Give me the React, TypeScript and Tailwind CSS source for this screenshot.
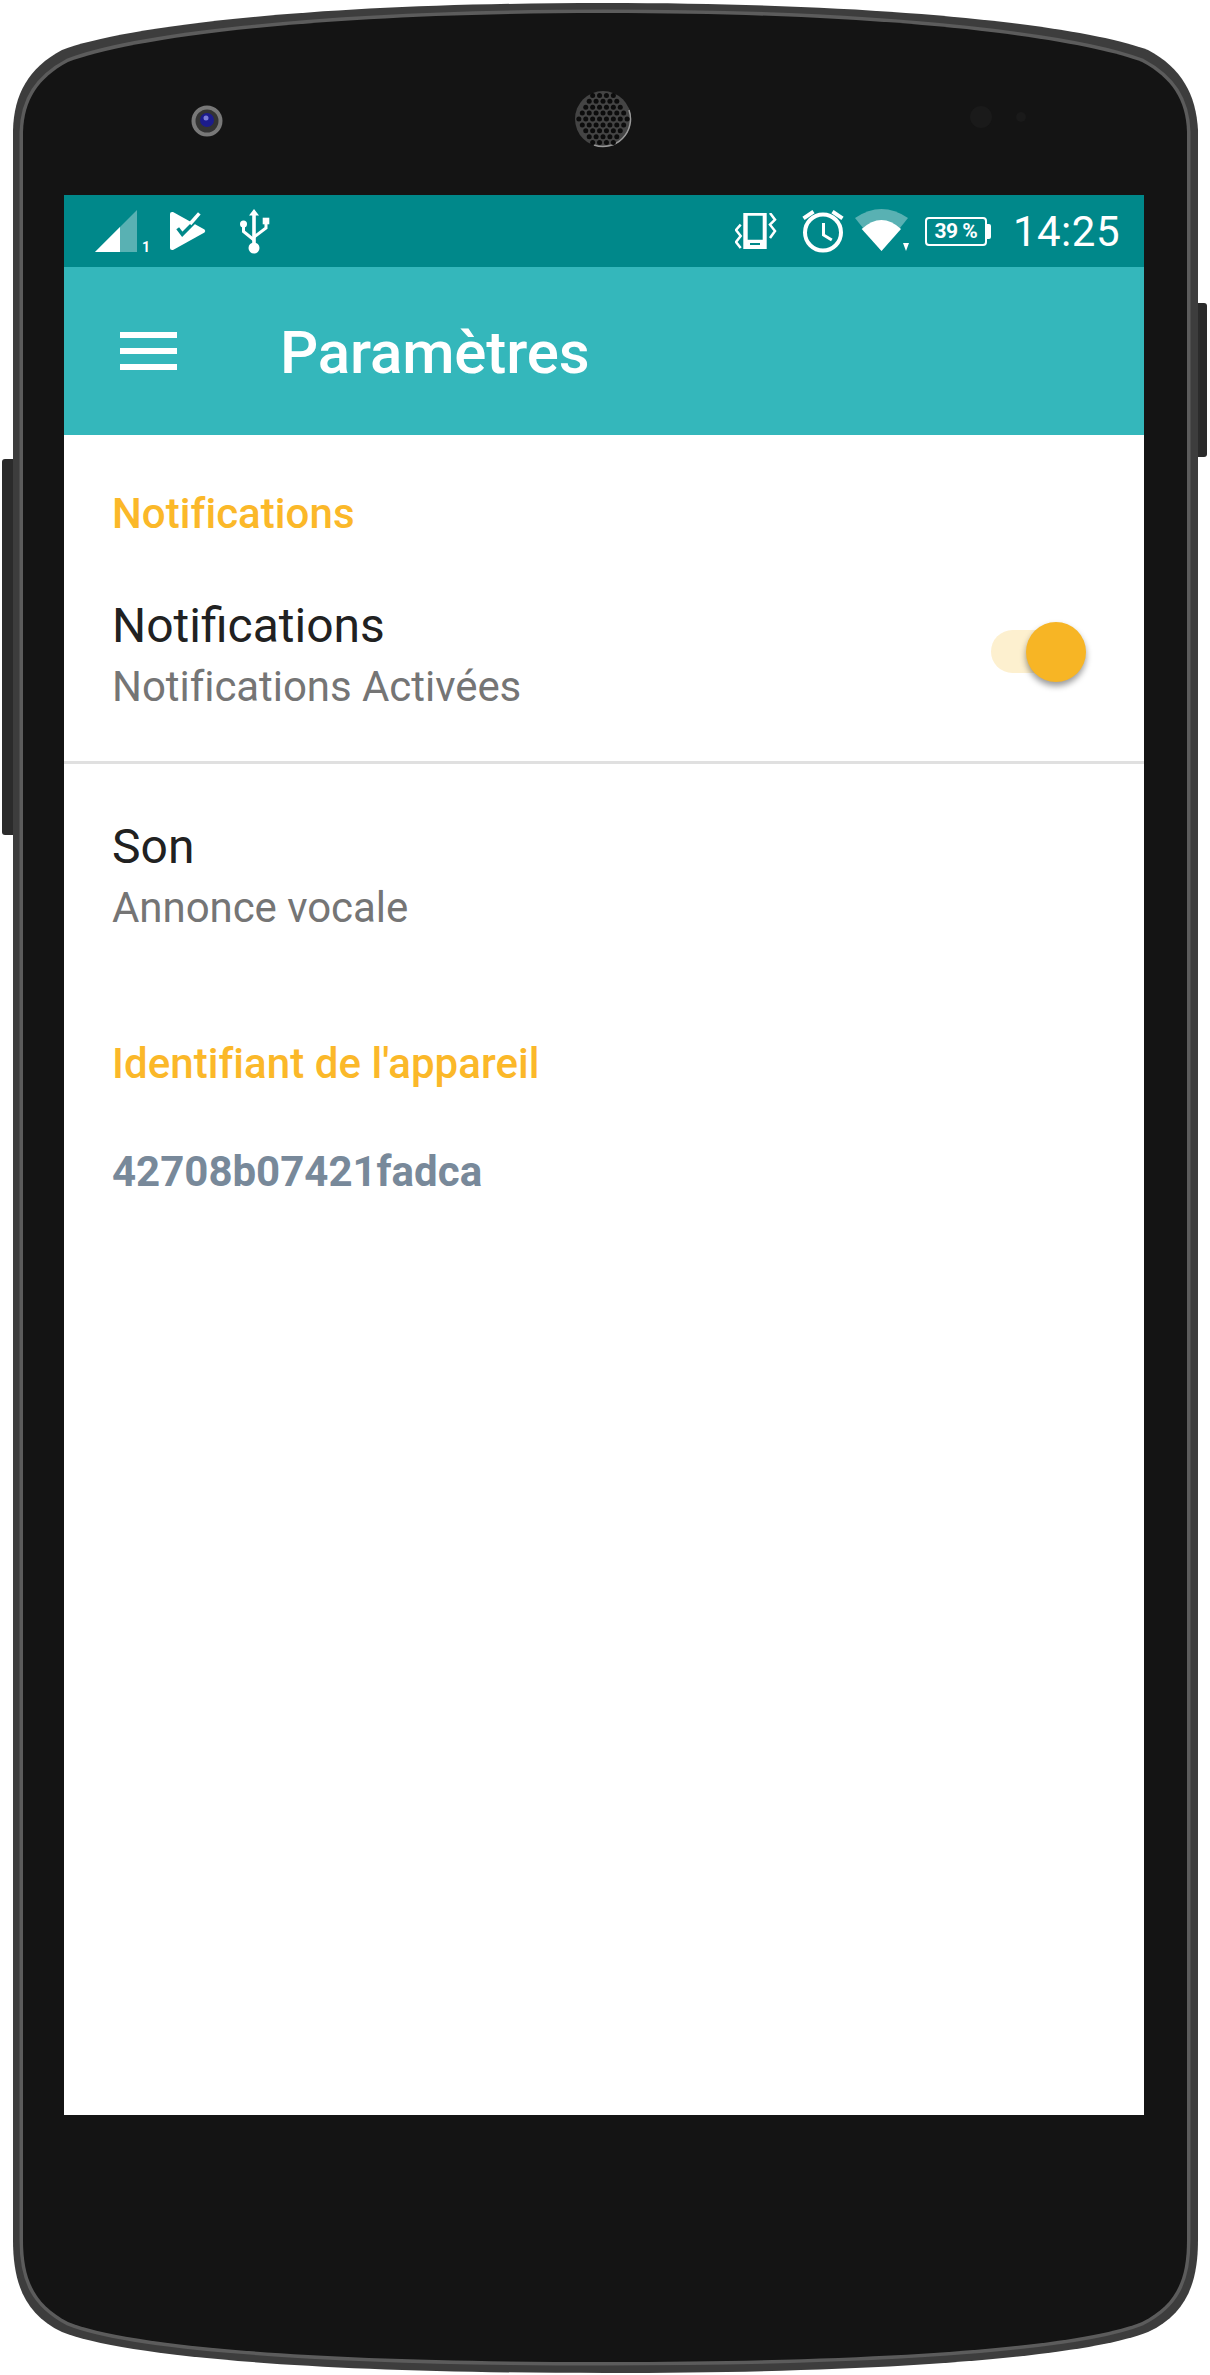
import React from "react";

const BODY_OUTER =
  "M13 130 C14 95 28 68 62 50 C120 28 300 3 605 3 C910 3 1090 28 1148 50 C1182 68 1196 95 1198 130 L1198 2240 C1198 2285 1185 2315 1148 2332 C1090 2355 910 2373 605 2373 C300 2373 120 2355 62 2332 C26 2315 13 2285 13 2240 Z";
const BODY_INNER =
  "M23 132 C24 100 38 78 68 62 C125 40 300 13 605 13 C910 13 1085 40 1142 62 C1172 78 1186 100 1187 132 L1187 2240 C1187 2282 1175 2305 1142 2322 C1085 2345 910 2362 605 2362 C300 2362 125 2345 68 2322 C36 2305 23 2282 23 2240 Z";

const PhoneBody: React.FC = () => (
  <svg className="absolute inset-0 h-[2375px] w-[1210px]" viewBox="0 0 1210 2375">
    <rect x="2" y="459" width="14" height="376" rx="3" fill="#2b2b2b" />
    <rect x="1194" y="303" width="13" height="154" rx="3" fill="#2b2b2b" />
    <path d={BODY_OUTER} fill="#3d3d3d" />
    <path d={BODY_INNER} fill="none" stroke="#5c5c5c" strokeWidth="7" />
    <path d={BODY_INNER} fill="#141414" />
  </svg>
);

const Camera: React.FC = () => (
  <svg className="h-[32px] w-[32px]" viewBox="0 0 32 32">
    <circle cx="16" cy="16" r="15.5" fill="#787878" />
    <circle cx="16" cy="16" r="11.5" fill="#333" />
    <circle cx="16" cy="15" r="7" fill="#1c1c8c" />
    <circle cx="15" cy="13" r="2.5" fill="#7c7cd8" />
  </svg>
);

const SPEAKER_HOLES: [number, number][] = [];
for (let row = -4; row <= 4; row++) {
  const count = 8 - Math.abs(row);
  for (let i = 0; i < count; i++) {
    SPEAKER_HOLES.push([29 + (i - (count - 1) / 2) * 6.9, 29 + row * 5.9]);
  }
}

const Speaker: React.FC = () => (
  <svg className="h-[58px] w-[58px]" viewBox="0 0 58 58">
    <circle cx="29" cy="29" r="28" fill="#444" />
    <path d="M55 20 A27.5 27.5 0 0 1 20 55" fill="none" stroke="#999" strokeWidth="1.5" />
    {SPEAKER_HOLES.map(([x, y]) => (
      <circle key={`${x}-${y}`} cx={x} cy={y} r="2.5" fill="#0c0c0c" />
    ))}
  </svg>
);

const SignalIcon: React.FC = () => (
  <svg className="h-[48px] w-[56px]" viewBox="0 -2 56 48">
    <path d="M42 1 V43 H0 Z" fill="#fff" fillOpacity="0.35" />
    <path d="M25 18 V43 H0 Z" fill="#fff" />
    <text x="47" y="43" fontSize="14" fontWeight="700" fill="#fff">
      1
    </text>
  </svg>
);

const PlayCheckIcon: React.FC = () => (
  <svg className="h-[44px] w-[36px]" viewBox="0 -3 36 44">
    <path
      d="M3 0 L34.5 17.5 Q36 19 34.5 20.5 L3 38 Q0 38.5 0 36 V2 Q0 -0.5 3 0 Z"
      fill="#fff"
    />
    <path d="M7.7 16.3 L12.3 22.3 L25 9.5" stroke="#00888a" strokeWidth="3.5" fill="none" />
    <path d="M20 12 L29.3 1.3" stroke="#fff" strokeWidth="3.5" fill="none" />
  </svg>
);

const UsbIcon: React.FC = () => (
  <svg className="h-[45px] w-[30px]" viewBox="0 0 30 45">
    <path d="M14 0 L19 6.5 H15.8 V36 H12.2 V6.5 H9 Z" fill="#fff" />
    <circle cx="14" cy="39" r="5.5" fill="#fff" />
    <circle cx="3.5" cy="15" r="3.5" fill="#fff" />
    <rect x="22.7" y="8.7" width="6.6" height="6.6" fill="#fff" />
    <path d="M3.5 17 V22.5 L14 31 M26 14 V19 L14 28" stroke="#fff" strokeWidth="3" fill="none" />
  </svg>
);

const VibrateIcon: React.FC = () => (
  <svg className="h-[37px] w-[42px]" viewBox="0 0 42 37">
    <path
      fillRule="evenodd"
      d="M8.3 0 H31.7 V36 H8.3 Z M12.7 2.7 V26.7 H27.7 V2.7 Z M15 30 V32 H25 V30 Z"
      fill="#fff"
    />
    <path d="M5.7 11.7 L1 17 L5.7 23 L1 29 L5.7 35" stroke="#fff" strokeWidth="2.5" fill="none" />
    <path d="M35 0 L40 6.7 L35 11.7 L40 18 L35 25" stroke="#fff" strokeWidth="2.5" fill="none" />
  </svg>
);

const AlarmIcon: React.FC = () => (
  <svg className="h-[44px] w-[44px]" viewBox="0 0 44 44">
    <circle cx="22" cy="23.5" r="18" stroke="#fff" strokeWidth="4" fill="none" />
    <path d="M22.5 14 V26 L30.8 31" stroke="#fff" strokeWidth="3" fill="none" />
    <path d="M2.5 9.3 L12.5 2.7 M41.5 9.3 L31.5 2.7" stroke="#fff" strokeWidth="4" fill="none" />
  </svg>
);

const WifiIcon: React.FC = () => (
  <svg className="h-[44px] w-[56px]" viewBox="0 0 56 44">
    <path d="M26.5 42 L0 9 Q26.5 -9 53 9 Z" fill="#fff" fillOpacity="0.35" />
    <path d="M26.5 42 L6.7 20 Q26.5 2 46 20 Z" fill="#fff" />
    <path d="M48 34 H54 L51 42 Z" fill="#fff" />
  </svg>
);

const BatteryIcon: React.FC = () => (
  <div className="flex items-center">
    <div className="flex h-[29px] w-[62px] items-center justify-center rounded-[4px] border-2 border-white text-[21px] font-bold leading-none tracking-[-0.5px] text-white">
      39 %
    </div>
    <div className="h-[15px] w-[4px] rounded-r-[2px] bg-white" />
  </div>
);

const StatusBar: React.FC = () => (
  <div className="flex h-[72px] items-center bg-[#00888a] pl-[31px] pr-[24px]">
    <div className="flex items-center">
      <SignalIcon />
      <div className="ml-[19px]">
        <PlayCheckIcon />
      </div>
      <div className="ml-[34px]">
        <UsbIcon />
      </div>
    </div>
    <div className="ml-auto flex items-center">
      <VibrateIcon />
      <div className="ml-[24px]">
        <AlarmIcon />
      </div>
      <div className="ml-[10px]">
        <WifiIcon />
      </div>
      <div className="ml-[14px]">
        <BatteryIcon />
      </div>
      <span className="ml-[22px] pt-[2px] text-[42px] leading-none tracking-[0.5px] text-white">14:25</span>
    </div>
  </div>
);

const AppBar: React.FC = () => (
  <div className="flex h-[168px] items-center bg-[#34b7bb] pl-[56px]">
    <div className="flex h-[38px] w-[57px] flex-col justify-between">
      <div className="h-[6px] bg-white" />
      <div className="h-[6px] bg-white" />
      <div className="h-[6px] bg-white" />
    </div>
    <h1 className="ml-[103px] pt-[3px] text-[60px] font-medium leading-none tracking-[-0.15px] text-white">
      Paramètres
    </h1>
  </div>
);

const SectionTitle: React.FC<{ title: string }> = ({ title }) => (
  <p className="text-[42px] font-medium leading-[50px] tracking-[0.05px] text-[#fbb829]">{title}</p>
);

const PreferenceRow: React.FC<{ title: string; summary: string }> = ({ title, summary }) => (
  <div>
    <p className="text-[48px] leading-[64px] text-[#212121]">{title}</p>
    <p className="text-[42px] leading-[58px] tracking-[-0.05px] text-[#757575]">{summary}</p>
  </div>
);

const Toggle: React.FC = () => (
  <div className="relative h-[60px] w-[95px]">
    <div className="absolute left-0 top-[8px] h-[43px] w-[90px] rounded-full bg-[#fdf0cf]" />
    <div className="absolute right-0 top-0 h-[60px] w-[60px] rounded-full bg-[#f7b525] shadow-[0_4px_6px_rgba(0,0,0,0.4)]" />
  </div>
);

export default function App() {
  return (
    <div className="relative h-[2375px] w-[1210px] overflow-hidden bg-white font-['Roboto',sans-serif]">
      <PhoneBody />
      <div className="relative">
        <div className="flex h-[195px] items-start">
          <div className="ml-[191px] mt-[105px]">
            <Camera />
          </div>
          <div className="ml-[351px] mt-[90px]">
            <Speaker />
          </div>
          <div className="ml-[338px] mt-[106px] h-[22px] w-[22px] rounded-full bg-[#1a1a1a]" />
          <div className="ml-[24px] mt-[112px] h-[10px] w-[10px] rounded-full bg-[#1a1a1a]" />
        </div>
        <div className="mx-[64px] flex h-[1920px] w-[1080px] flex-col bg-white">
          <StatusBar />
          <AppBar />
          <div className="flex flex-col">
            <div className="px-[48px] pt-[54px]">
              <SectionTitle title="Notifications" />
            </div>
            <div className="flex h-[222px] items-start justify-between pl-[48px] pr-[58px]">
              <div className="mt-[55px]">
                <PreferenceRow title="Notifications" summary="Notifications Activées" />
              </div>
              <div className="mt-[83px]">
                <Toggle />
              </div>
            </div>
            <div className="h-[3px] bg-[#e0e0e0]" />
            <div className="px-[48px] pt-[51px]">
              <PreferenceRow title="Son" summary="Annonce vocale" />
            </div>
            <div className="px-[48px] pt-[102px]">
              <SectionTitle title="Identifiant de l'appareil" />
            </div>
            <div className="px-[48px] pt-[58px]">
              <p className="text-[42px] font-bold leading-[50px] text-[#78899a]">42708b07421fadca</p>
            </div>
          </div>
        </div>
      </div>
    </div>
  );
}
